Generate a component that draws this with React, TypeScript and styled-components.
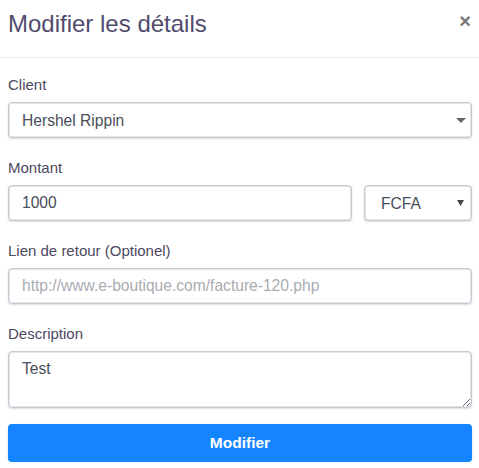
import * as React from 'react';
import styled, { createGlobalStyle } from 'styled-components';

const GlobalStyle = createGlobalStyle`
  html, body {
    margin: 0;
    padding: 0;
    background: #ffffff;
  }
  body {
    font-family: 'Liberation Sans', Arial, sans-serif;
  }
  * {
    box-sizing: border-box;
  }
`;

const Modal = styled.div`
  width: 479px;
  background: #ffffff;
`;

const Header = styled.div`
  height: 58px;
  padding: 0 8px 0 8px;
  display: flex;
  align-items: flex-start;
  justify-content: space-between;
  border-bottom: 1px solid #e9ecef;
`;

const Title = styled.h2`
  margin: 9px 0 0 0;
  font-size: 24px;
  font-weight: normal;
  line-height: 30px;
  color: #504b6e;
`;

const Close = styled.button`
  margin: 11px 0 0 0;
  padding: 0;
  border: none;
  background: none;
  font-size: 20px;
  font-weight: bold;
  line-height: 20px;
  color: #777777;
  cursor: pointer;
  font-family: 'Liberation Sans', Arial, sans-serif;
`;

const Form = styled.form`
  padding: 16px 7px 0 8px;
  display: flex;
  flex-direction: column;
`;

const Group = styled.div`
  margin-bottom: 19px;
`;

const Label = styled.label`
  display: block;
  font-size: 15px;
  line-height: 22px;
  color: #4b4860;
  margin-bottom: 6px;
`;

const Row = styled.div`
  display: flex;
  gap: 12px;
`;

const FieldBase = `
  width: 100%;
  height: 36px;
  border: 1px solid #c6cad0;
  border-radius: 4px;
  box-shadow: 0 1px 2px rgba(0, 0, 0, 0.14), inset 0 0 0 1px #e3e6ea;
  background: #ffffff;
  font-family: 'Liberation Sans', Arial, sans-serif;
  font-size: 15.6px;
  color: #484e5a;
  outline: none;
`;

const Input = styled.input`
  ${FieldBase}
  padding: 0 13px;
  &::placeholder {
    color: #a9acb2;
  }
`;

const SelectWrap = styled.div<{ $width?: number }>`
  position: relative;
  flex: ${p => (p.$width ? `0 0 ${p.$width}px` : '1 1 auto')};
`;

const Select = styled.select<{ $pad: number }>`
  ${FieldBase}
  appearance: none;
  -webkit-appearance: none;
  padding: 0 30px 0 ${p => p.$pad}px;
`;

const Caret = styled.svg`
  position: absolute;
  top: 50%;
  pointer-events: none;
`;

const TextArea = styled.textarea`
  ${FieldBase}
  height: 57px;
  padding: 8px 13px;
  resize: vertical;
  display: block;
`;

const Submit = styled.button`
  margin-top: -3px;
  height: 38px;
  width: 100%;
  border: none;
  border-radius: 4px;
  background: #1485ff;
  color: #ffffff;
  font-family: 'Liberation Sans', Arial, sans-serif;
  font-size: 15.5px;
  font-weight: bold;
  box-shadow: 0 1px 3px rgba(0, 0, 0, 0.15);
  cursor: pointer;
`;

const App: React.FC = () => {
  return (
    <>
      <GlobalStyle />
      <Modal>
        <Header>
          <Title>Modifier les détails</Title>
          <Close type="button">×</Close>
        </Header>
        <Form onSubmit={e => e.preventDefault()}>
          <Group>
            <Label>Client</Label>
            <SelectWrap>
              <Select $pad={13} defaultValue="hershel">
                <option value="hershel">Hershel Rippin</option>
              </Select>
              <Caret
                width="10"
                height="6"
                viewBox="0 0 10 6"
                style={{ right: 6, marginTop: -2 }}
              >
                <path d="M0 0 L10 0 L5 5 Z" fill="#666" />
              </Caret>
            </SelectWrap>
          </Group>
          <Group>
            <Label>Montant</Label>
            <Row>
              <SelectWrap>
                <Input defaultValue="1000" />
              </SelectWrap>
              <SelectWrap $width={108}>
                <Select $pad={16} defaultValue="fcfa">
                  <option value="fcfa">FCFA</option>
                </Select>
                <Caret
                  width="7"
                  height="6"
                  viewBox="0 0 7 6"
                  style={{ right: 8, marginTop: -3 }}
                >
                  <path d="M0 0 L7 0 L3.5 6 Z" fill="#444" />
                </Caret>
              </SelectWrap>
            </Row>
          </Group>
          <Group>
            <Label>Lien de retour (Optionel)</Label>
            <Input placeholder="http://www.e-boutique.com/facture-120.php" />
          </Group>
          <Group>
            <Label>Description</Label>
            <TextArea defaultValue="Test" />
          </Group>
          <Submit type="submit">Modifier</Submit>
        </Form>
      </Modal>
    </>
  );
};

export default App;
